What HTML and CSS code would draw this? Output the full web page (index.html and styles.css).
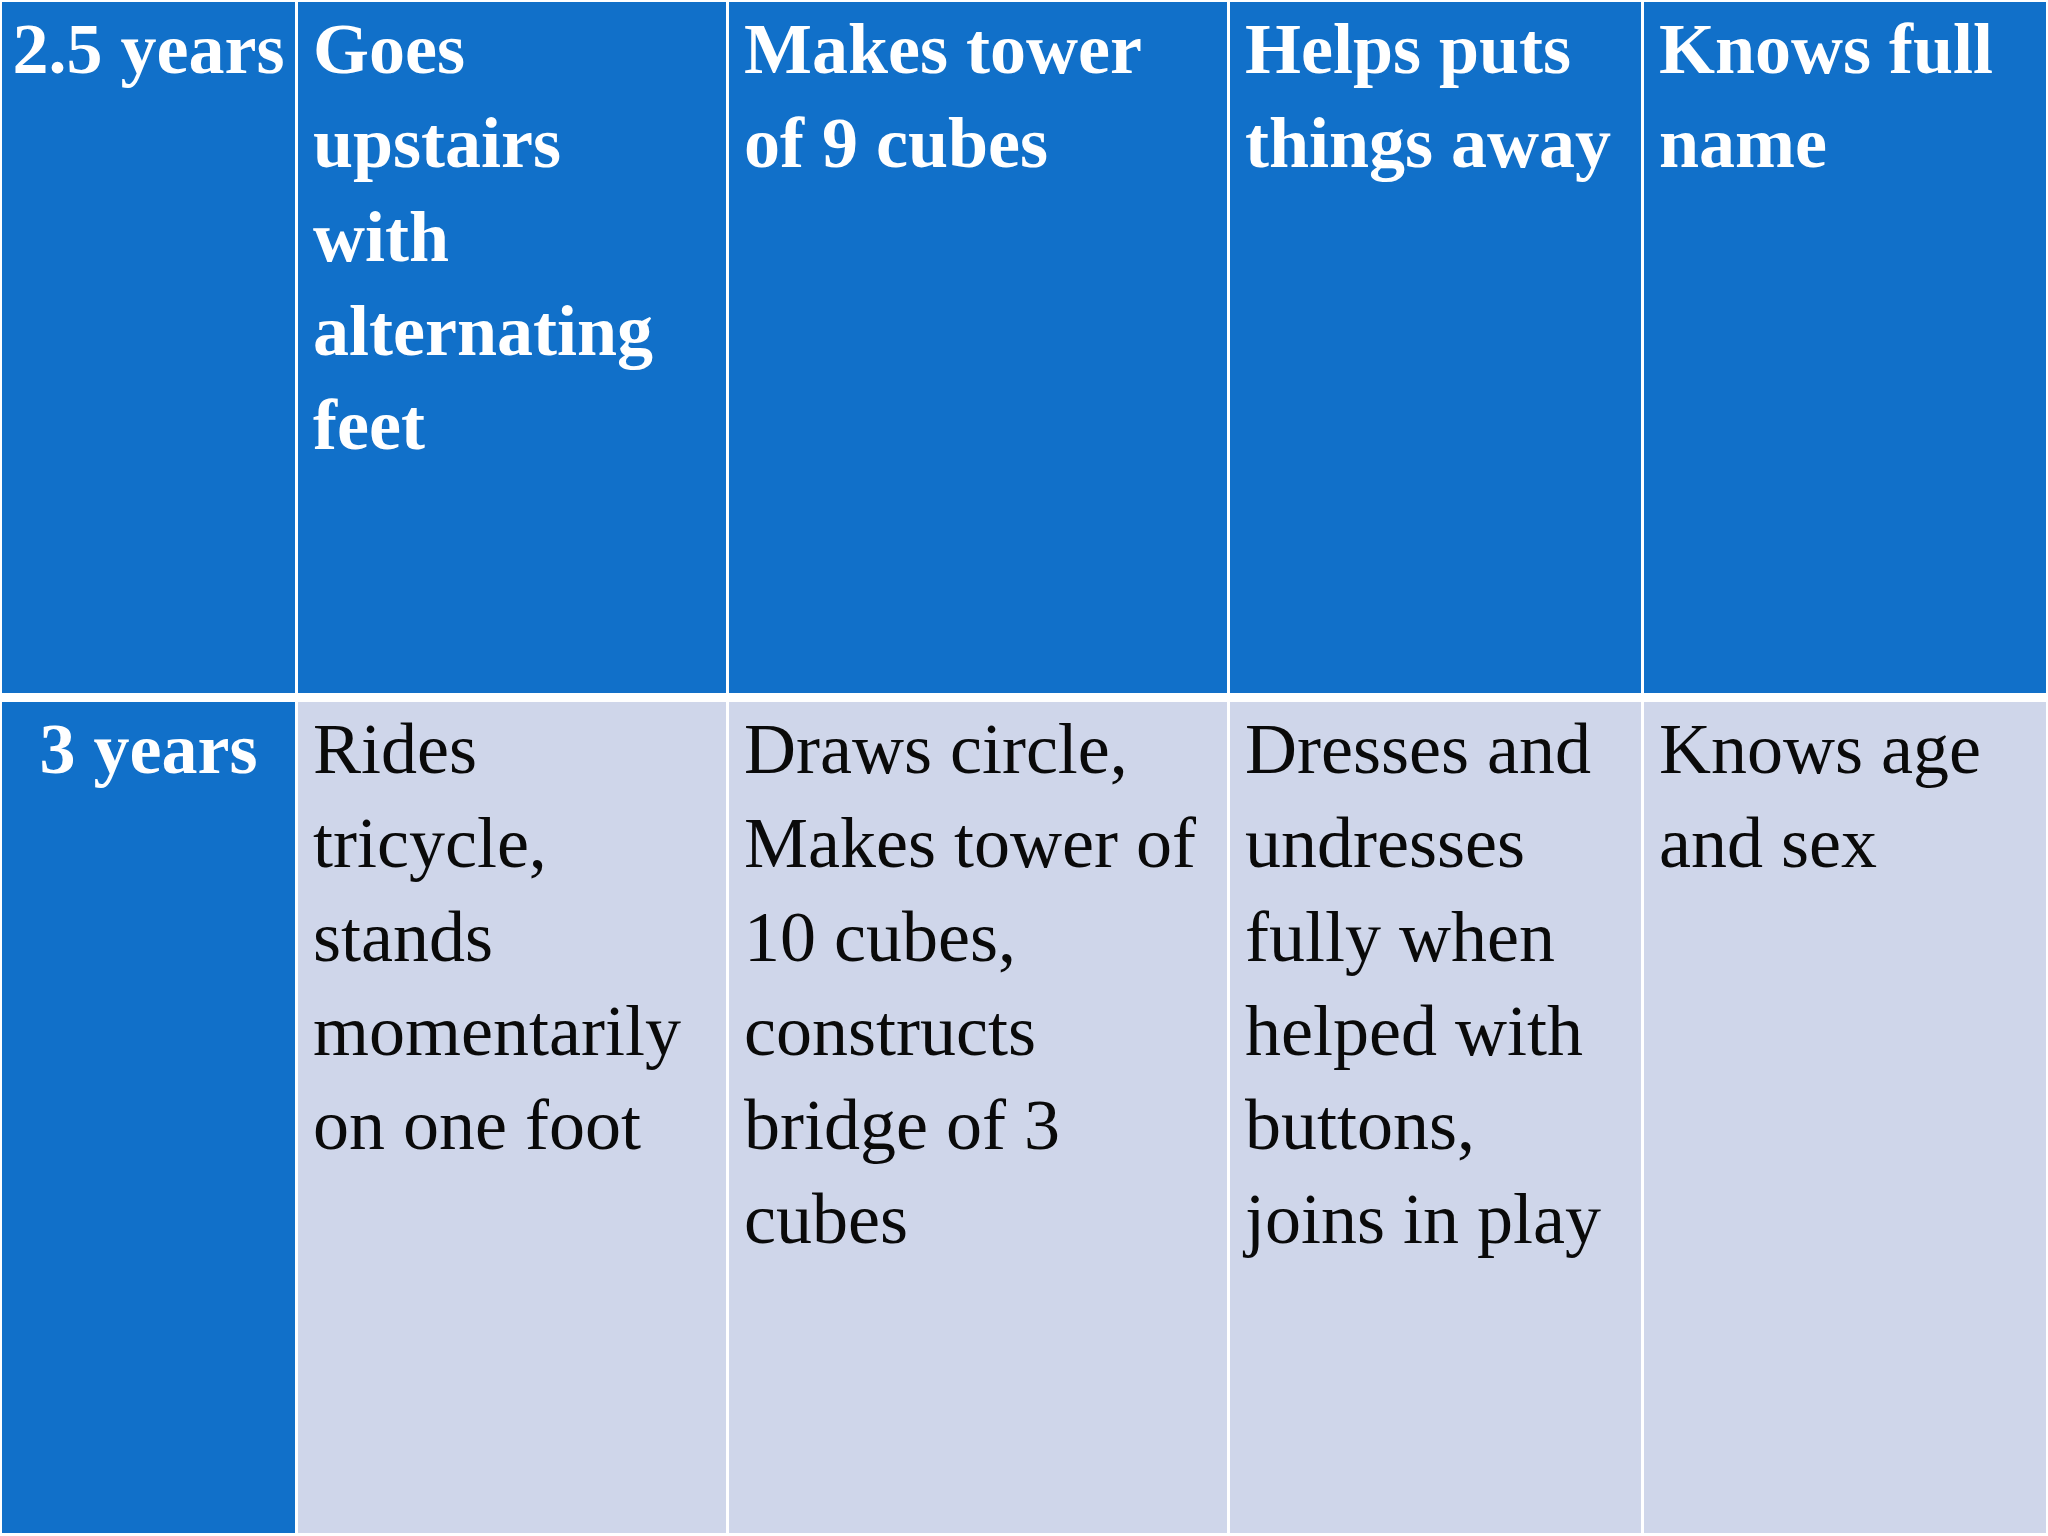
FILE: index.html
```html
<!DOCTYPE html>
<html lang="en">
<head>
<meta charset="utf-8">
<title>Milestones</title>
<link rel="stylesheet" href="styles.css">
</head>
<body>
<div class="table">
  <div class="cell head age">2.5 years</div>
  <div class="cell head">Goes<br>upstairs<br>with<br>alternating<br>feet</div>
  <div class="cell head">Makes tower<br>of 9 cubes</div>
  <div class="cell head">Helps puts<br>things away</div>
  <div class="cell head">Knows full<br>name</div>

  <div class="cell head age">3 years</div>
  <div class="cell body">Rides<br>tricycle,<br>stands<br>momentarily<br>on one foot</div>
  <div class="cell body">Draws circle,<br>Makes tower of<br>10 cubes,<br>constructs<br>bridge of 3<br>cubes</div>
  <div class="cell body">Dresses and<br>undresses<br>fully when<br>helped with<br>buttons,<br>joins in play</div>
  <div class="cell body">Knows age<br>and sex</div>
</div>
</body>
</html>
```
FILE: styles.css
```css
html, body {
  margin: 0;
  padding: 0;
  background: #ffffff;
}

.table {
  width: 2048px;
  height: 1536px;
  box-sizing: border-box;
  padding: 2px 2px 3px 2px;
  display: grid;
  grid-template-columns: 293px 428px 498px 411px 402px;
  grid-template-rows: 691px 831px;
  column-gap: 3px;
  row-gap: 9px;
  background: #ffffff;
  font-family: "Liberation Serif", "DejaVu Serif", serif;
  font-size: 72px;
  line-height: 94px;
}

.cell {
  padding: 0 8px 0 15px;
  white-space: nowrap;
  overflow: hidden;
}

.head {
  background: #1170c9;
  color: #ffffff;
  font-weight: bold;
}

.age {
  padding-left: 0;
  padding-right: 0;
  text-align: center;
}

.body {
  background: #cfd6ea;
  color: #0a0a0a;
}
```
